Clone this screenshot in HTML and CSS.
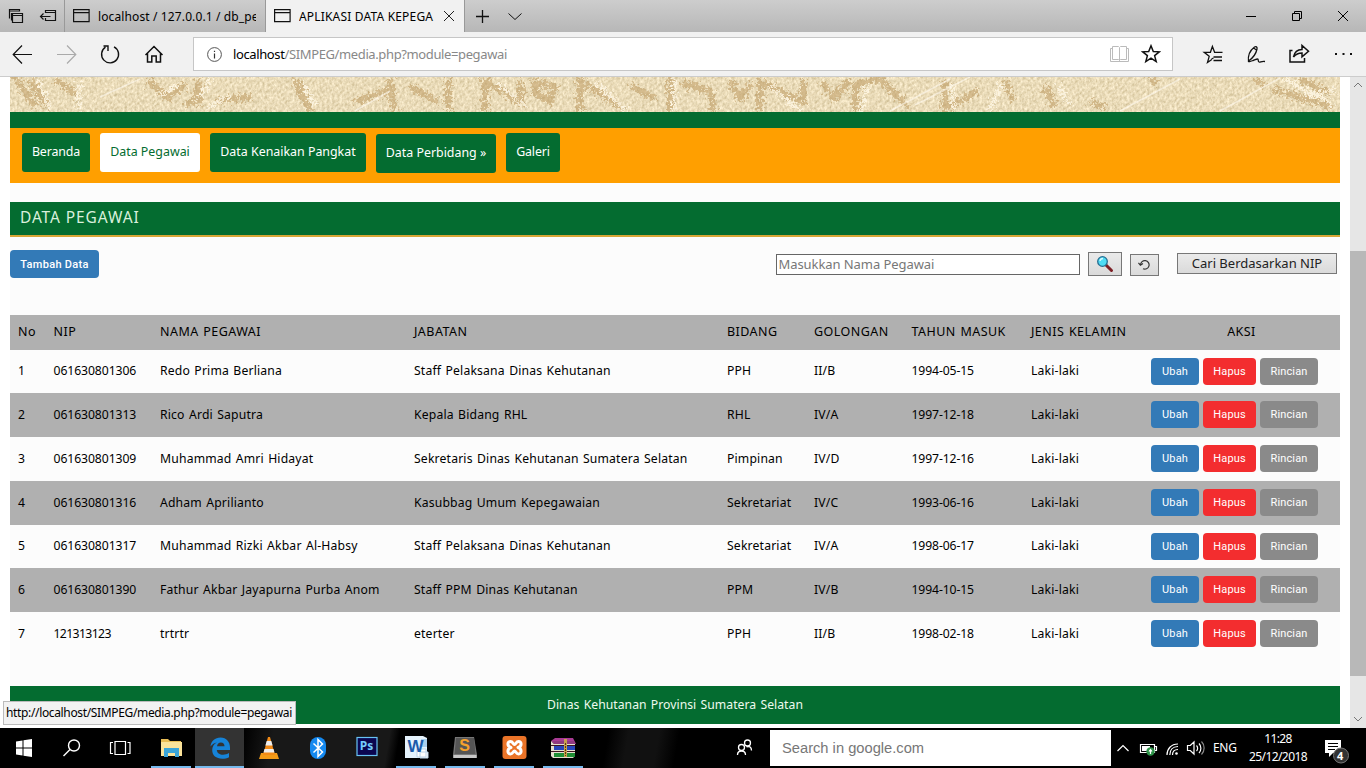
FILE: index.html
```html
<!DOCTYPE html>
<html lang="id">
<head>
<meta charset="utf-8">
<title>APLIKASI DATA KEPEGAWAIAN</title>
<link rel="stylesheet" href="styles.css">
</head>
<body>
<div class="tabs">
  <div class="tab-tools">
    <svg width="65" height="32" fill="none" stroke="#111" stroke-width="1.2"><path d="M9.5 18.5v-9h10v2M9.500 11h10M12.500 20h-1v-7M12.500 13.500h10v9h-10zM12.500 15.500h10M45.500 13v-2.500h10v10h-10v-2.500M45.500 12.500h10M40.500 16.500h10M43.500 13.500l-3 3 3 3"/></svg>
  </div>
  <div class="tab">
    <svg width="17" height="14" fill="none" stroke="#111" stroke-width="1.2"><path d="M.6 .6h15.500v12h-15.500zM.6 3.600h15.500"/></svg>
    <span class="tab-title t-local">localhost / 127.0.0.1 / db_pe</span>
  </div>
  <div class="tab active">
    <svg width="17" height="14" fill="none" stroke="#111" stroke-width="1.2"><path d="M.6 .6h15.500v12h-15.500zM.6 3.600h15.500"/></svg>
    <span class="tab-title t-app">APLIKASI DATA KEPEGA</span>
    <svg class="tab-x" width="12" height="12" stroke="#222" stroke-width="1"><path d="M1 1l10 10M11 1L1 11"/></svg>
  </div>
  <svg class="tab-extra" width="70" height="32" fill="none" stroke="#111"><path stroke-width="1.300" d="M11 16.500h13M17.500 10v13"/><path d="M43.500 13.500l6.500 6 6.500-6"/></svg>
  <svg class="win-controls" width="130" height="32" fill="none" stroke="#000"><path d="M10 16.500h10M56.500 13.500h7v7h-7zM58.500 13.500v-2h7v7h-2M102 11l10 10M112 11l-10 10"/></svg>
</div>
<div class="toolbar">
  <svg width="193" height="44" fill="none" stroke="#111" stroke-width="1.200"><path d="M13.500 22.500H32M22 13.500l-8.800 9 8.800 9"/><path stroke="#aaa" d="M57 22.500h18.500M67 13.500l8.800 9-8.800 9"/><path stroke-width="1.400" d="M105.500 15.200a8.500 8.500 0 1 0 8.500-.4M103.500 14h4.500v5"/><path stroke-width="1.500" d="M145.500 23l8.500-8.500 8.500 8.500M147.500 21.500v8.500h4.300v-6h4.400v6h4.300v-8.500"/></svg>
  <div class="address">
    <svg width="15" height="15" fill="none" stroke="#555"><circle cx="7.500" cy="7.500" r="6.900"/><path stroke="#333" stroke-width="1.200" d="M7.500 6.500v5M7.500 3.700v1.400"/></svg>
    <span class="url"><b>localhost</b>/SIMPEG/media.php?module=pegawai</span>
    <svg class="book" width="19" height="18" fill="none" stroke="#bbb"><path d="M9.500 3v12.500M2.500 1.500h6l1 1 1-1h6v13h-6l-1 1-1-1h-6zM2 3.500H.5v13h18v-13H17"/></svg>
    <svg width="20" height="20" fill="none" stroke="#111" stroke-width="1.500"><path d="M10 1.800l2.300 5.700 6 .3-4.700 3.800 1.600 6-5.200-3.400-5.200 3.400 1.600-6-4.700-3.800 6-.3z"/></svg>
  </div>
  <svg class="tools" width="170" height="44" fill="none" stroke="#111" stroke-width="1.300"><path d="M15.800 27.500l-4.300 3 1.700-6.200-5-4h6.200l2-5.800 2.200 5.800h7.900M17.500 25h8.500M17.500 28.500h8.500M15.500 27l2-1"/><path d="M52.500 30c-1-7 2-12 6-15 1.500-1 3 0 2.500 2-1 5-4 9-8.500 12M52.500 30l4.500-1.500c2-.5 3-1.500 4.500-1.500s0 2.500 1.500 3 2-1 6-.5M57.500 16l3 2"/><path stroke-width="1.500" d="M96.500 18.500H94v11.500h14.500v-4M97.500 25c1-5 4-7.500 8.500-7.500v-4l6.500 5.700-6.500 5.700v-4c-4 0-6 1-8.500 4z"/><path fill="#111" stroke="none" d="M139 21h2v2h-2zM146.500 21h2v2h-2zM154 21h2v2h-2z"/></svg>
</div>
<div class="viewport">
  <div class="page">
    <svg class="banner" width="1330" height="35">
      <defs>
        <filter id="cloth" x="0" y="0" width="100%" height="100%" color-interpolation-filters="sRGB"><feTurbulence type="fractalNoise" baseFrequency=".4 .3" numOctaves="3" seed="4"/><feColorMatrix values=".28 0 0 0 .77  .3 0 0 0 .7  .36 0 0 0 .53  0 0 0 0 1"/></filter>
        <filter id="rough" x="-2%" y="-30%" width="104%" height="160%" color-interpolation-filters="sRGB"><feTurbulence type="fractalNoise" baseFrequency=".35" numOctaves="2" seed="8" result="n"/><feDisplacementMap in="SourceGraphic" in2="n" scale="16" xChannelSelector="R" yChannelSelector="G"/><feGaussianBlur stdDeviation=".6"/></filter>
        <pattern id="weave" width="4" height="4" patternUnits="userSpaceOnUse" patternTransform="rotate(-35)"><path d="M0 1h4" stroke="#fffbe5" stroke-opacity=".3"/></pattern>
      </defs>
      <rect width="1330" height="35" fill="#e6d7b0"/>
      <rect width="1330" height="35" filter="url(#cloth)"/>
      <rect width="1330" height="35" fill="url(#weave)"/>
      <g filter="url(#rough)" fill="none" stroke-width="6" stroke="#bd9a62" stroke-opacity=".55">
        <path d="M5 0l20 30M20 3l18 27M45 2l22 16M138 3l20 18 18-14M190 4l-5 16M175 27l18-4M205 24l35-4M285 2l15 32M345 25l35-12M380 2l4 32M400 9l28 16M438 3v30M475 34V5l36 20V4M525 5l20 5-5 14-14-7zM570 34V4l42 27M620 8l25 14M660 0v34M672 6l28 8 4 20M720 4l10 18 12-17M750 34V5l43 20V3M812 5l12 16 16-18M845 34V8l24-7 28 28M935 4v28l33-18M995 4l8 20M1035 10l10 20M1080 25l15 5M1140 2l6 4M1245 2l10 6M1262 12l60 18M1290 2l30 14"/>
        <path stroke="#fff8e6" stroke-opacity=".8" stroke-width="3" d="M28 2l12 30M69 5v29M150 18l18-10M200 1l-10 20M218 19l-20 12M292 4l13 24M487 6l28 22M585 6l32 28M664 0v34M760 9l30 24M850 34l8-24M942 8l2 25M980 32l12-26M1048 8l12 20M1275 2l50 27M1295 20l30-8"/>
      </g>
      <path fill="none" stroke="#fffaf0" stroke-opacity=".6" stroke-width="1.500" d="M880 34l60-32M905 28l55-28M1110 34l60-32M1210 34l60-33M90 20l40-18M345 34l35-20"/>
    </svg>
    <div class="stripe"></div>
    <nav class="nav">
      <a class="w-ber">Beranda</a><a class="current w-peg">Data Pegawai</a><a class="w-pan">Data Kenaikan Pangkat</a><a class="sub w-bid">Data Perbidang »</a><a class="w-gal">Galeri</a>
    </nav>
    <h1 class="heading"><span>DATA PEGAWAI</span></h1>
    <div class="actions">
      <a class="btn add">Tambah Data</a>
      <div class="search">
        <input type="text" placeholder="Masukkan Nama Pegawai">
        <button class="find"><svg width="18" height="18"><path d="M9.500 9.500l6 6" stroke="#7c1f25" stroke-width="3" stroke-linecap="round"/><circle cx="6.500" cy="6.500" r="4.800" fill="#4fdcf5" stroke="#286d91" stroke-width="1.300"/><path d="M4 6a3 3 0 0 1 3-2.500" stroke="#d8faff" fill="none" stroke-width="1.300"/></svg></button>
        <button class="reload"><svg width="13" height="12" fill="none" stroke="#333" stroke-width="1.200"><path d="M2.500 5.800A4.300 4.300 0 1 1 5 9.800M.4 3.800l2 2.400 2.600-1.800"/></svg></button>
        <button class="nip">Cari Berdasarkan NIP</button>
      </div>
    </div>
    <table class="staff">
      <colgroup><col class="c1"><col class="c2"><col class="c3"><col class="c4"><col class="c5"><col class="c6"><col class="c7"><col class="c8"><col></colgroup>
      <thead><tr><th>No</th><th>NIP</th><th>NAMA PEGAWAI</th><th>JABATAN</th><th>BIDANG</th><th>GOLONGAN</th><th>TAHUN MASUK</th><th>JENIS KELAMIN</th><th class="aksi">AKSI</th></tr></thead>
      <tbody>
      <tr class="short"><td>1</td><td class="num">061630801306</td><td>Redo Prima Berliana</td><td>Staff Pelaksana Dinas Kehutanan</td><td>PPH</td><td>II/B</td><td class="date">1994-05-15</td><td>Laki-laki</td><td><div class="row-btns"><a class="btn edit">Ubah</a><a class="btn del">Hapus</a><a class="btn info">Rincian</a></div></td></tr>
      <tr><td>2</td><td class="num">061630801313</td><td>Rico Ardi Saputra</td><td>Kepala Bidang RHL</td><td>RHL</td><td>IV/A</td><td class="date">1997-12-18</td><td>Laki-laki</td><td><div class="row-btns"><a class="btn edit">Ubah</a><a class="btn del">Hapus</a><a class="btn info">Rincian</a></div></td></tr>
      <tr><td>3</td><td class="num">061630801309</td><td>Muhammad Amri Hidayat</td><td>Sekretaris Dinas Kehutanan Sumatera Selatan</td><td>Pimpinan</td><td>IV/D</td><td class="date">1997-12-16</td><td>Laki-laki</td><td><div class="row-btns"><a class="btn edit">Ubah</a><a class="btn del">Hapus</a><a class="btn info">Rincian</a></div></td></tr>
      <tr><td>4</td><td class="num">061630801316</td><td>Adham Aprilianto</td><td>Kasubbag Umum Kepegawaian</td><td>Sekretariat</td><td>IV/C</td><td class="date">1993-06-16</td><td>Laki-laki</td><td><div class="row-btns"><a class="btn edit">Ubah</a><a class="btn del">Hapus</a><a class="btn info">Rincian</a></div></td></tr>
      <tr class="short"><td>5</td><td class="num">061630801317</td><td>Muhammad Rizki Akbar Al-Habsy</td><td>Staff Pelaksana Dinas Kehutanan</td><td>Sekretariat</td><td>IV/A</td><td class="date">1998-06-17</td><td>Laki-laki</td><td><div class="row-btns"><a class="btn edit">Ubah</a><a class="btn del">Hapus</a><a class="btn info">Rincian</a></div></td></tr>
      <tr><td>6</td><td class="num">061630801390</td><td>Fathur Akbar Jayapurna Purba Anom</td><td>Staff PPM Dinas Kehutanan</td><td>PPM</td><td>IV/B</td><td class="date">1994-10-15</td><td>Laki-laki</td><td><div class="row-btns"><a class="btn edit">Ubah</a><a class="btn del">Hapus</a><a class="btn info">Rincian</a></div></td></tr>
      <tr><td>7</td><td class="num seven">121313123</td><td>trtrtr</td><td>eterter</td><td>PPH</td><td>II/B</td><td class="date">1998-02-18</td><td>Laki-laki</td><td><div class="row-btns"><a class="btn edit">Ubah</a><a class="btn del">Hapus</a><a class="btn info">Rincian</a></div></td></tr>
      </tbody>
    </table>
    <footer class="footer"><span>Dinas Kehutanan Provinsi Sumatera Selatan</span></footer>
  </div>
  <div class="scroll">
    <svg width="16" height="17" fill="none" stroke="#777"><path d="M4 10l4-4 4 4"/></svg>
    <div class="thumb"></div>
    <svg width="16" height="17" fill="none" stroke="#777"><path d="M4 6l4 4 4-4"/></svg>
  </div>
  <div class="status"><span>http://localhost/SIMPEG/media.php?module=pegawai</span></div>
</div>
<div class="taskbar">
  <div class="slot"><svg width="48" height="40" fill="#fff"><path d="M16 13.500l6.500-1v7H16zM23.500 12.300L32 11v8.500h-8.500zM16 20.500h6.500v7l-6.500-1zM23.500 20.500H32V29l-8.500-1.300z"/></svg></div>
  <div class="slot"><svg width="48" height="40" fill="none" stroke="#fff" stroke-width="1.400"><circle cx="26" cy="17.500" r="5.500"/><path d="M22 21.500l-6.500 6.500"/></svg></div>
  <div class="slot"><svg width="48" height="40" fill="none" stroke="#fff" stroke-width="1.200"><path d="M19 13.500h10.500v13H19zM17 14.500h-2.500v11H17M31.500 14.500H34v11h-2.500"/></svg></div>
  <div class="slot open first"><svg width="48" height="40"><path fill="#e9bd55" d="M14 11h7l2 2h11v15H14z"/><path fill="#fbe39a" d="M14 14h21v14H14z"/><path fill="#3ba5d8" d="M17 29v-9h15v9h-4v-4h-7v4z"/></svg></div>
  <div class="slot open focus"><svg width="48" height="40"><path fill="#1683d8" d="M14.500 18.500C15 13 19 9.500 24.500 9.500c6 0 9.500 4.500 9.500 10v2.500H20.800c.2 3.200 3 4.800 6.200 4.800 2.300 0 4.300-.6 6-1.700v4.200c-2 1-4.300 1.500-6.800 1.500-6 0-10-3.300-10-8.700 0-3.300 1.700-6 4.700-7.500-2.500.5-4.700 1.800-6.400 3.900zM21 18.300h7.500c0-2.300-1.300-3.800-3.600-3.800-2.200 0-3.600 1.600-3.900 3.800z"/></svg></div>
  <div class="slot"><svg width="48" height="40"><path fill="#f39b18" d="M16 25h16l2 6H14z"/><path fill="#f28a16" d="M23 9h2l5 18H18z"/><path fill="#eee" d="M21.700 13h4.600l1.300 4.500h-7.200zM19.500 21h9l1 3.500h-11z"/></svg></div>
  <div class="slot"><svg width="48" height="40"><rect x="16" y="9" width="16" height="22" rx="8" fill="#1489f0"/><path fill="none" stroke="#fff" stroke-width="1.500" d="M19.500 15.500l9 8.500-4.500 4.500v-17l4.500 4.500-9 8.500"/></svg></div>
  <div class="slot"><svg width="48" height="40"><rect x="14" y="9.500" width="20" height="18" fill="#0b0650" stroke="#68c3f5" stroke-width="1.200"/></svg><b class="ps">Ps</b></div>
  <div class="slot open"><svg width="48" height="40"><path fill="#e5f2fc" d="M13 8h18l4 2v20H13z"/><path fill="#a9cfed" d="M29 11h6v8h-6z"/><path fill="#fff" stroke="#bdd5e8" d="M25 21h9v8h-9zM28 24h8v6h-8z"/></svg><b class="word">W</b></div>
  <div class="slot open"><svg width="48" height="40"><path fill="#777" d="M14 9h19l3 18v3H12v-3z"/><path fill="#c8c8c8" d="M12.500 27h23v3h-23z"/><path fill="#555" d="M15 10h18l1.500 16h-21z"/></svg><b class="subl">S</b></div>
  <div class="slot open"><svg width="48" height="40"><rect x="12.500" y="8" width="24" height="23" rx="3" fill="#ea7428"/><path fill="none" stroke="#fff" stroke-width="3" stroke-linecap="round" stroke-linejoin="round" d="M21 19.500c-4-1-4-6-.5-6 2.500 0 2.500 3 4 3s1.500-3 4-3c3.500 0 3.500 5-.5 6 4 1 4 6.500 .5 6.500-2.500 0-2.500-3-4-3s-1.500 3-4 3c-3.500 0-3.500-5.500 .5-6.500z"/></svg></div>
  <div class="slot open"><svg width="48" height="40"><path fill="#a83b94" d="M12 13l4-3h18l3 6H15z"/><path fill="#e6e0d0" d="M12 13l3 3h21v12l-2 2H14l-2-2z"/><path fill="#8f3a80" d="M14 13h21l1 3H15z"/><path fill="#2745ba" d="M15 18h21v4H15z"/><path fill="#208f36" d="M15 25h21v4H15z"/><path fill="#3d1420" d="M12 17h24v1H12zM12 23h24v1H12z"/><path fill="#c8a04d" d="M25 11h3v18h-3z"/><path stroke="#5a3910" d="M26.500 15v13" stroke-dasharray="2 1"/></svg></div>
  <svg class="people" width="46" height="40" fill="none" stroke="#fff" stroke-width="1.300"><circle cx="17.500" cy="19.500" r="3"/><path d="M13.500 27c0-3 1.500-4 4-4s4 1 4 4"/><circle cx="23.500" cy="15" r="3"/><path d="M22.500 18.800c3-1 5 .5 5 3.700"/></svg>
  <div class="tsearch"><span>Search in google.com</span></div>
  <svg class="tray" width="98" height="40" fill="none" stroke="#fff" stroke-width="1.200"><path d="M6.500 23l5.500-5.500 5.500 5.500"/><path d="M29.500 16.500h14v8h-14zM44 18.500h1.500v4H44"/><path fill="#fff" stroke="none" d="M31 18h8v5h-8z"/><circle cx="39.500" cy="23.500" r="4.200" fill="#2d9348" stroke="none"/><path d="M39.500 26v-4M38 23.500l1.500-2 1.500 2"/><path d="M56 27c0-6 4-11 11-11M58.800 27c0-5 3-8.500 8.200-8.500M61.500 27c0-3.500 2-5.500 5.500-5.500"/><circle cx="65.500" cy="25.500" r="1.300" fill="#fff" stroke="none"/><path d="M76.500 17.500h2.800l3.700-3.500v12l-3.700-3.500h-2.800zM85.500 17.500c1.500 1.500 1.500 4 0 5.500M88 15.500c2.500 2.500 2.500 7 0 9.500"/><path stroke="#888" d="M90.500 13.500c3.500 3.500 3.500 9.500 0 13"/></svg>
  <span class="lang">ENG</span>
  <div class="clock"><span>11:28</span><span>25/12/2018</span></div>
  <div class="notice"><svg width="28" height="32"><path fill="#fff" d="M1 4h16v13H9l-4 4v-4H1z"/><path stroke="#000" d="M4 7.500h10M4 10.500h10M4 13.500h7"/><circle cx="17" cy="19.500" r="7.500" fill="#333" stroke="#777"/></svg><b>4</b></div>
</div>
</body>
</html>
```
FILE: styles.css
```css
* { box-sizing: border-box; }
body { margin: 0; width: 1366px; height: 768px; overflow: hidden; display: flex; flex-direction: column; font-family: "Noto Sans", sans-serif; background: #fff; color: #000; }
svg { display: block; flex: none; }
span { white-space: nowrap; }

.tabs { height: 32px; display: flex; background: linear-gradient(#cdcdcd, #b7b7b7); }
.tab-tools { width: 65px; border-right: 1px solid #999; }
.tab { width: 200px; display: flex; align-items: center; padding-left: 8px; gap: 8px; font-size: 12px; }
.tab-title { overflow: hidden; }
.t-local { width: 158px; letter-spacing: .12px; }
.tab.active { background: #f1f1f1; border-left: 1px solid #999; border-right: 1px solid #999; }
.t-app { width: 136px; letter-spacing: .18px; }
.win-controls { margin-left: auto; }

.toolbar { height: 45px; display: flex; background: #f1f1f1; border-bottom: 1px solid #ccc; }
.address { width: 980px; height: 34px; margin-top: 5px; background: #fff; border: 1px solid #c6c6c6; display: flex; align-items: center; padding: 0 11px 0 13px; }
.url { margin-left: 11px; color: #888; font-size: 13px; letter-spacing: -.38px; }
.url b { font-weight: 400; color: #000; }
.book { margin-left: auto; margin-right: 12px; }
.tools { margin-left: 23px; }

.viewport { height: 651px; display: flex; justify-content: space-between; padding-left: 10px; position: relative; }
.page { width: 1330px; height: 647px; background: #fcfcfc; display: flex; flex-direction: column; }
.stripe { height: 16px; background: #046c30; }
.nav { height: 55px; background: #ff9f00; display: flex; align-items: flex-start; gap: 10px; padding: 5px 12px; }
.nav a { height: 39px; border-radius: 3px; background: #046c30; color: #fff; font-size: 12.4px; line-height: 37px; text-align: center; white-space: nowrap; }
.nav .current { background: #fff; color: #046c30; }
.nav .sub { margin-top: 1px; }
.nav .w-ber, .nav .w-gal { letter-spacing: -.15px; }
.w-ber { width: 68px; } .w-peg { width: 100px; } .w-pan { width: 156px; } .w-bid { width: 120px; } .w-gal { width: 54px; }
.heading { margin: 19px 0 0; height: 35px; padding-left: 10px; background: #046c30; border-bottom: 2px solid #d8a636; color: #d9f0dc; font-size: 15.5px; font-weight: 400; line-height: 31px; letter-spacing: .9px; }
.actions { height: 78px; display: flex; justify-content: space-between; padding: 13px 3px 0 0; }
.btn { display: flex; align-items: center; justify-content: center; height: 27.5px; border-radius: 4px; color: #fff; font-family: Roboto, "Noto Sans", sans-serif; font-size: 11px; font-weight: 400; letter-spacing: .15px; }
.add { width: 89px; background: #337ab7; font-weight: 500; letter-spacing: .3px; padding-top: 1px; }
.search { display: flex; align-items: flex-start; }
.search input { width: 304px; height: 21px; margin-top: 4px; border: 1px solid #666; padding: 0 1.500px 1px; font: 13px "Noto Sans", sans-serif; letter-spacing: -.07px; background: #fff; }
.search input::placeholder { color: #777; }
.search button { border: 1px solid #777; background: linear-gradient(#eaeaea, #dadada); padding: 0; display: flex; align-items: center; justify-content: center; font: 13px "Noto Sans", sans-serif; color: #222; }
.search .find { width: 34px; height: 24px; margin: 2px 8px 0; }
.search .reload { width: 29px; height: 22px; margin: 4px 18px 0 0; }
.search .nip { width: 160px; height: 21px; margin-top: 3px; padding-bottom: 1px; }

.staff { width: 1330px; table-layout: fixed; border-collapse: collapse; font-size: 12.2px; word-spacing: 1px; letter-spacing: .17px; }
.c1 { width: 35.5px; } .c2 { width: 106.5px; } .c3 { width: 254px; } .c4 { width: 313px; } .c5 { width: 87px; } .c6 { width: 97.500px; } .c7 { width: 119.500px; } .c8 { width: 120px; }
.staff th { height: 35px; padding: 0 8px 2px; font-weight: 400; text-align: left; background: #b0b0b0; white-space: nowrap; font-size: 12.5px; letter-spacing: .45px; }
.staff .aksi { text-align: center; }
.staff td { height: 44px; padding: 0 8px 1px; white-space: nowrap; }
.staff .short td { height: 43px; padding-bottom: 2px; }
.staff .short td:last-child { padding-bottom: 0; }
.staff .num { letter-spacing: -.08px; }
.staff .seven { letter-spacing: -.6px; }
.staff .date { letter-spacing: -.12px; }
.staff tbody tr:nth-child(even) { background: #b0b0b0; }
.row-btns { display: flex; gap: 4px; }
.edit { width: 48px; background: #337ab7; }
.del { width: 53px; background: #f32d2f; }
.info { width: 58px; background: #8a8a8a; }
.footer { margin-top: auto; height: 38px; background: #046c30; color: #eefaee; font-size: 12.2px; line-height: 37px; text-align: center; word-spacing: 1px; letter-spacing: .04px; }
.scroll { width: 16px; background: #e6e6e6; display: flex; flex-direction: column; }
.thumb { height: 425px; margin: 157px 0 auto; background: #b8b8b8; }
.status { position: absolute; left: 3px; top: 624px; width: 293px; height: 24px; border: 1px solid #bbb; background: #f2f2f2; font-size: 12px; line-height: 22px; padding-left: 2px; letter-spacing: -.35px; }

.taskbar { height: 40px; background: linear-gradient(100deg, #000 0 240px, #181818 270px 385px, #000 395px 600px, #111 620px 650px, #000 670px); display: flex; color: #fff; }
.slot { width: 49px; height: 40px; position: relative; display: flex; justify-content: center; }
.slot:nth-child(-n+3) { width: 48px; }
.slot.first { margin-left: 2px; }
.open::after { content: ""; position: absolute; left: 5px; right: 4px; bottom: 0; height: 2px; background: #76b9ed; }
.focus { background: #333; }
.focus::after { left: 0; right: 0; }
.slot b { position: absolute; left: 0; right: 0; text-align: center; }
.ps { top: 9px; font-size: 12px; color: #74ccff; }
.word { top: 6px; font: 700 17px/26px "Liberation Sans", sans-serif; color: #1c5baa; }
.subl { top: 5px; font: 700 16px/25px "Liberation Sans", sans-serif; color: #f6a12c; }
.people { margin-left: 137px; }
.tsearch { width: 341px; height: 36px; margin-top: 2px; background: #fff; color: #777; font: 14.700px/36px "Liberation Sans", sans-serif; padding-left: 12px; }
.lang { width: 35px; font-size: 12px; line-height: 39px; padding-left: 4px; letter-spacing: -.3px; }
.clock { width: 68px; font-size: 12px; line-height: 18px; padding-top: 2px; display: flex; flex-direction: column; align-items: center; letter-spacing: -.6px; }
.notice { margin-left: 12px; padding-top: 8px; position: relative; width: 29px; }
.notice b { position: absolute; left: 13px; top: 20px; font-size: 11px; line-height: 16px; }
```
